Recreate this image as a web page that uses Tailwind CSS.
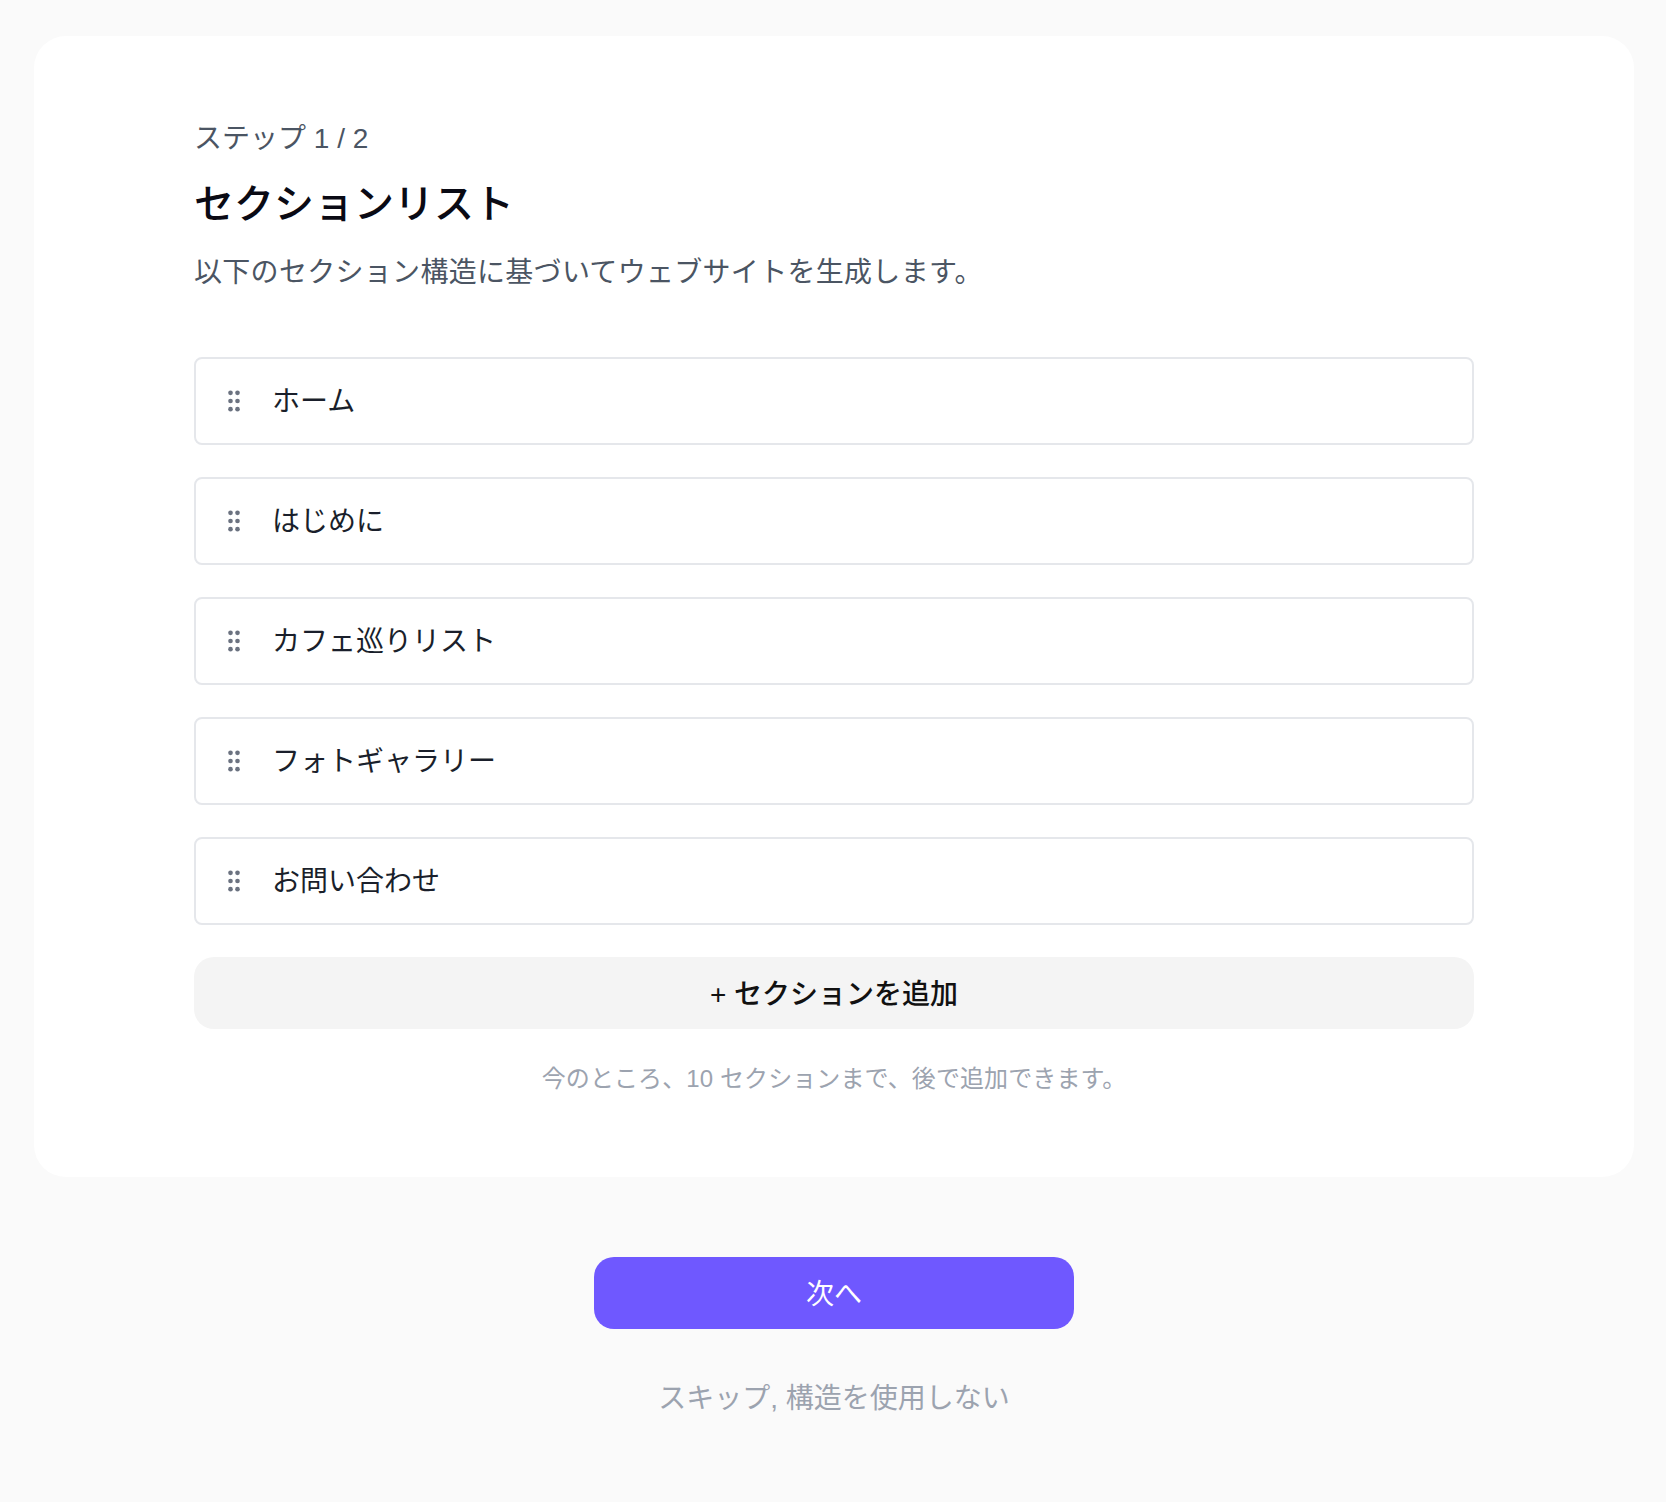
<!DOCTYPE html>
<html lang="ja">
<head>
    <meta charset="UTF-8">
    <meta name="viewport" content="width=device-width, initial-scale=1.0">
    <title>セクションリスト</title>
    <script src="https://cdn.jsdelivr.net/npm/@tailwindcss/browser@4"></script>
</head>
<body class="bg-[#fafafa] font-['Liberation_Sans','Noto_Sans_CJK_JP',sans-serif] min-h-[1502px]">
    <div class="pt-9 pl-[2px] flex flex-col items-center">
        <!-- Card -->
        <div class="w-[1600px] bg-white rounded-[32px] px-40 pt-[85px] pb-20">
            <p class="text-[28px] leading-9 text-[#4b5563]">ステップ 1 / 2</p>
            <h1 class="mt-[21px] text-[40px] leading-[52px] font-medium text-[#0a0a14]">セクションリスト</h1>
            <p class="mt-[23px] text-[28px] leading-10 tracking-[0.3px] text-[#4b5563]">以下のセクション構造に基づいてウェブサイトを生成します。</p>

            <!-- Section rows -->
            <div class="mt-16 flex flex-col gap-8">
                <div class="h-[88px] flex items-center gap-6 px-6 bg-white border-2 border-[#e5e7eb] rounded-lg">
                    <svg class="w-7 h-7 text-[#6b7280]" viewBox="0 0 24 24" fill="currentColor"><circle cx="9" cy="5" r="2"/><circle cx="15" cy="5" r="2"/><circle cx="9" cy="12" r="2"/><circle cx="15" cy="12" r="2"/><circle cx="9" cy="19" r="2"/><circle cx="15" cy="19" r="2"/></svg>
                    <span class="pt-[2px] text-[28px] text-[#1a1f2b]">ホーム</span>
                </div>
                <div class="h-[88px] flex items-center gap-6 px-6 bg-white border-2 border-[#e5e7eb] rounded-lg">
                    <svg class="w-7 h-7 text-[#6b7280]" viewBox="0 0 24 24" fill="currentColor"><circle cx="9" cy="5" r="2"/><circle cx="15" cy="5" r="2"/><circle cx="9" cy="12" r="2"/><circle cx="15" cy="12" r="2"/><circle cx="9" cy="19" r="2"/><circle cx="15" cy="19" r="2"/></svg>
                    <span class="pt-[2px] text-[28px] text-[#1a1f2b]">はじめに</span>
                </div>
                <div class="h-[88px] flex items-center gap-6 px-6 bg-white border-2 border-[#e5e7eb] rounded-lg">
                    <svg class="w-7 h-7 text-[#6b7280]" viewBox="0 0 24 24" fill="currentColor"><circle cx="9" cy="5" r="2"/><circle cx="15" cy="5" r="2"/><circle cx="9" cy="12" r="2"/><circle cx="15" cy="12" r="2"/><circle cx="9" cy="19" r="2"/><circle cx="15" cy="19" r="2"/></svg>
                    <span class="pt-[2px] text-[28px] text-[#1a1f2b]">カフェ巡りリスト</span>
                </div>
                <div class="h-[88px] flex items-center gap-6 px-6 bg-white border-2 border-[#e5e7eb] rounded-lg">
                    <svg class="w-7 h-7 text-[#6b7280]" viewBox="0 0 24 24" fill="currentColor"><circle cx="9" cy="5" r="2"/><circle cx="15" cy="5" r="2"/><circle cx="9" cy="12" r="2"/><circle cx="15" cy="12" r="2"/><circle cx="9" cy="19" r="2"/><circle cx="15" cy="19" r="2"/></svg>
                    <span class="pt-[2px] text-[28px] text-[#1a1f2b]">フォトギャラリー</span>
                </div>
                <div class="h-[88px] flex items-center gap-6 px-6 bg-white border-2 border-[#e5e7eb] rounded-lg">
                    <svg class="w-7 h-7 text-[#6b7280]" viewBox="0 0 24 24" fill="currentColor"><circle cx="9" cy="5" r="2"/><circle cx="15" cy="5" r="2"/><circle cx="9" cy="12" r="2"/><circle cx="15" cy="12" r="2"/><circle cx="9" cy="19" r="2"/><circle cx="15" cy="19" r="2"/></svg>
                    <span class="pt-[2px] text-[28px] text-[#1a1f2b]">お問い合わせ</span>
                </div>
                <button class="h-[72px] w-full pt-1 bg-[#f4f4f4] rounded-[20px] text-[28px] font-medium text-[#111111]">+ セクションを追加</button>
            </div>

            <p class="mt-8 text-2xl leading-9 tracking-[0.1px] text-center text-[#9ca3af]">今のところ、10 セクションまで、後で追加できます。</p>
        </div>

        <button class="mt-20 w-[480px] h-[72px] pt-1 bg-[#6f58ff] rounded-[20px] text-[28px] text-white">次へ</button>
        <a href="#" class="mt-[50px] text-[28px] leading-10 text-[#9ca3af]">スキップ, 構造を使用しない</a>
    </div>
</body>
</html>
